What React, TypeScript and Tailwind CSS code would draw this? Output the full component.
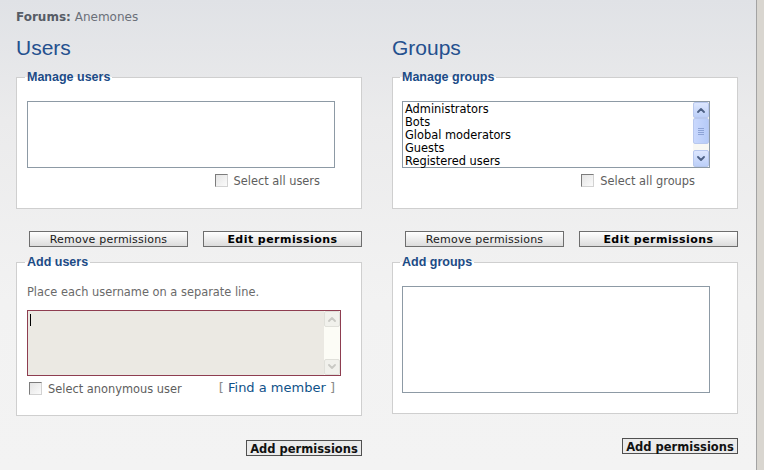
import React from "react";

const dv = "font-['DejaVu_Sans',Verdana,sans-serif]";
const lib = "font-['Liberation_Sans',Arial,sans-serif]";

function Checkbox() {
  return (
    <span className="block w-[13px] h-[13px] shrink-0 border border-t-[#7c7c7c] border-l-[#7c7c7c] border-r-[#d2d2d2] border-b-[#d2d2d2] bg-[linear-gradient(135deg,#e4e4e4,#fbfbfb)]" />
  );
}

function Legend({ children }: { children: React.ReactNode }) {
  return (
    <legend
      className={`${lib} font-bold text-[12.5px] leading-[14px] text-[#1c4b86] px-[2px] -ml-[2px]`}
    >
      {children}
    </legend>
  );
}

function Chevron({ up, color }: { up?: boolean; color: string }) {
  return (
    <svg width="8" height="6" viewBox="0 0 8 6">
      <path
        d={up ? "M1 5 L4 2 L7 5" : "M1 1 L4 4 L7 1"}
        fill="none"
        stroke={color}
        strokeWidth="1.8"
        strokeLinecap="round"
        strokeLinejoin="round"
      />
    </svg>
  );
}

function XpButton({ up, h }: { up?: boolean; h: string }) {
  return (
    <div
      className={`${h} rounded-[2px] border border-[#b8c8ee] bg-[linear-gradient(to_bottom,#dde7fe,#bccff8)] flex items-center justify-center`}
    >
      <Chevron up={up} color="#4d6185" />
    </div>
  );
}

function GroupsList() {
  const items = [
    "Administrators",
    "Bots",
    "Global moderators",
    "Guests",
    "Registered users",
  ];
  return (
    <div className="w-[308px] h-[67px] border border-[#8d9aa5] bg-white flex">
      <div
        className={`flex-1 pl-[2px] pt-[1px] text-[11.4px] leading-[13px] text-black ${dv}`}
      >
        {items.map((i) => (
          <div key={i}>{i}</div>
        ))}
      </div>
      <div className="w-[16px] flex flex-col bg-[#f8f8f4]">
        <XpButton up h="h-[16px]" />
        <div className="h-[26px] rounded-[2px] border border-[#b8c8ee] bg-[linear-gradient(to_right,#c9d8fd,#b6cbf8)] flex flex-col items-center justify-center gap-[1px]">
          <span className="block w-[6px] h-[1px] bg-[#8da3d6]" />
          <span className="block w-[6px] h-[1px] bg-[#8da3d6]" />
          <span className="block w-[6px] h-[1px] bg-[#8da3d6]" />
          <span className="block w-[6px] h-[1px] bg-[#8da3d6]" />
        </div>
        <div className="flex-1" />
        <XpButton h="h-[17px]" />
      </div>
    </div>
  );
}

function Btn({
  children,
  bold,
}: {
  children: React.ReactNode;
  bold?: boolean;
}) {
  return (
    <div
      className={`w-[159px] h-[16px] border border-[#6e6e6e] bg-[linear-gradient(to_bottom,#ffffff,#dcdcdc)] text-center text-[11px] leading-[12px] pt-[2px] whitespace-nowrap ${dv} ${
        bold
          ? "font-bold tracking-[0.45px] text-black"
          : "tracking-[0.2px] text-[#1a1a1a]"
      }`}
    >
      {children}
    </div>
  );
}

function AddBtn() {
  return (
    <div
      className={`w-[116px] h-[16px] border border-[#505050] bg-[#ebebeb] text-center text-[11.5px] leading-[12px] pt-[2px] font-bold text-[#111] whitespace-nowrap ${dv}`}
    >
      Add permissions
    </div>
  );
}

function SelectAll({ label }: { label: string }) {
  return (
    <div className="w-[308px] flex justify-end items-start gap-[6px] pr-[15px] mt-[6px]">
      <Checkbox />
      <span
        className={`${dv} text-[11.4px] leading-[13px] mt-[1px] text-[#5e5e5e]`}
      >
        {label}
      </span>
    </div>
  );
}

function UsersColumn() {
  return (
    <div className="w-[346px] flex flex-col">
      <h1 className={`${lib} text-[21px] leading-[24px] text-[#24508e]`}>
        Users
      </h1>
      <fieldset className="mt-[10px] border border-[#cfcfcf] bg-white pl-[10px] pr-[10px] pt-[17px] pb-[20px] min-w-0">
        <Legend>Manage users</Legend>
        <div className="w-[308px] h-[67px] border border-[#8d9aa5] bg-white" />
        <SelectAll label="Select all users" />
      </fieldset>
      <div className="mt-[22px] flex justify-end gap-[15px]">
        <Btn>Remove permissions</Btn>
        <Btn bold>Edit permissions</Btn>
      </div>
      <fieldset className="mt-[8px] border border-[#cfcfcf] bg-white pl-[10px] pr-[10px] pt-[17px] pb-[19px] min-w-0">
        <Legend>Add users</Legend>
        <div className={`${dv} text-[11.4px] leading-[13px] text-[#6a6a6a]`}>
          Place each username on a separate line.
        </div>
        <div className="mt-[11px] w-[314px] h-[66px] border border-[#8e3d50] bg-[#ebe9e3] flex">
          <div className="flex-1">
            <div className="ml-[2px] mt-[3px] w-[1px] h-[12px] bg-black" />
          </div>
          <div className="w-[16px] bg-[#fcfcf6] flex flex-col justify-between">
            <div className="h-[16px] rounded-[2px] border border-[#e0e0da] bg-[#f1f1ec] flex items-center justify-center">
              <Chevron up color="#c9c9c4" />
            </div>
            <div className="h-[16px] rounded-[2px] border border-[#e0e0da] bg-[#f1f1ec] flex items-center justify-center">
              <Chevron color="#c9c9c4" />
            </div>
          </div>
        </div>
        <div className="mt-[6px] w-[314px] flex justify-between items-start pl-[2px] pr-[6px]">
          <div className="flex items-start gap-[6px]">
            <Checkbox />
            <span
              className={`${dv} text-[11.4px] leading-[13px] mt-[1px] text-[#5e5e5e]`}
            >
              Select anonymous user
            </span>
          </div>
          <span
            className={`${dv} text-[13px] leading-[15px] -mt-[2px] whitespace-nowrap`}
          >
            <span className="text-[#8a8a8a]">[ </span>
            <span className="text-[#105289]">Find a member</span>
            <span className="text-[#8a8a8a]"> ]</span>
          </span>
        </div>
      </fieldset>
      <div className="mt-[24px] flex justify-end">
        <AddBtn />
      </div>
    </div>
  );
}

function GroupsColumn() {
  return (
    <div className="w-[346px] flex flex-col">
      <h1 className={`${lib} text-[21px] leading-[24px] text-[#24508e]`}>
        Groups
      </h1>
      <fieldset className="mt-[10px] border border-[#cfcfcf] bg-white pl-[9px] pr-[10px] pt-[17px] pb-[20px] min-w-0">
        <Legend>Manage groups</Legend>
        <GroupsList />
        <SelectAll label="Select all groups" />
      </fieldset>
      <div className="mt-[22px] flex justify-end gap-[15px]">
        <Btn>Remove permissions</Btn>
        <Btn bold>Edit permissions</Btn>
      </div>
      <fieldset className="mt-[8px] border border-[#cfcfcf] bg-white pl-[9px] pr-[10px] pt-[17px] pb-[20px] min-w-0">
        <Legend>Add groups</Legend>
        <div className="w-[308px] h-[107px] border border-[#8d9aa5] bg-white" />
      </fieldset>
      <div className="mt-[24px] flex justify-end">
        <AddBtn />
      </div>
    </div>
  );
}

export default function App() {
  return (
    <div className="w-[764px] h-[470px] flex overflow-hidden">
      <div className="w-[756px] h-full bg-[linear-gradient(to_bottom,#e0e2e6_0px,#ebebec_120px,#f2f2f2_300px,#f3f3f3_100%)] pl-[16px] pt-[10px]">
        <div className={`${dv} text-[12px] leading-[15px]`}>
          <b className="text-[#575c66]">Forums:</b>{" "}
          <span className="text-[#6b7079]">Anemones</span>
        </div>
        <div className="mt-[11px] flex gap-[30px] items-start">
          <UsersColumn />
          <GroupsColumn />
        </div>
      </div>
      <div className="w-[8px] h-full border-l border-[#a3a3a3] bg-[#d9d6d0]" />
    </div>
  );
}
